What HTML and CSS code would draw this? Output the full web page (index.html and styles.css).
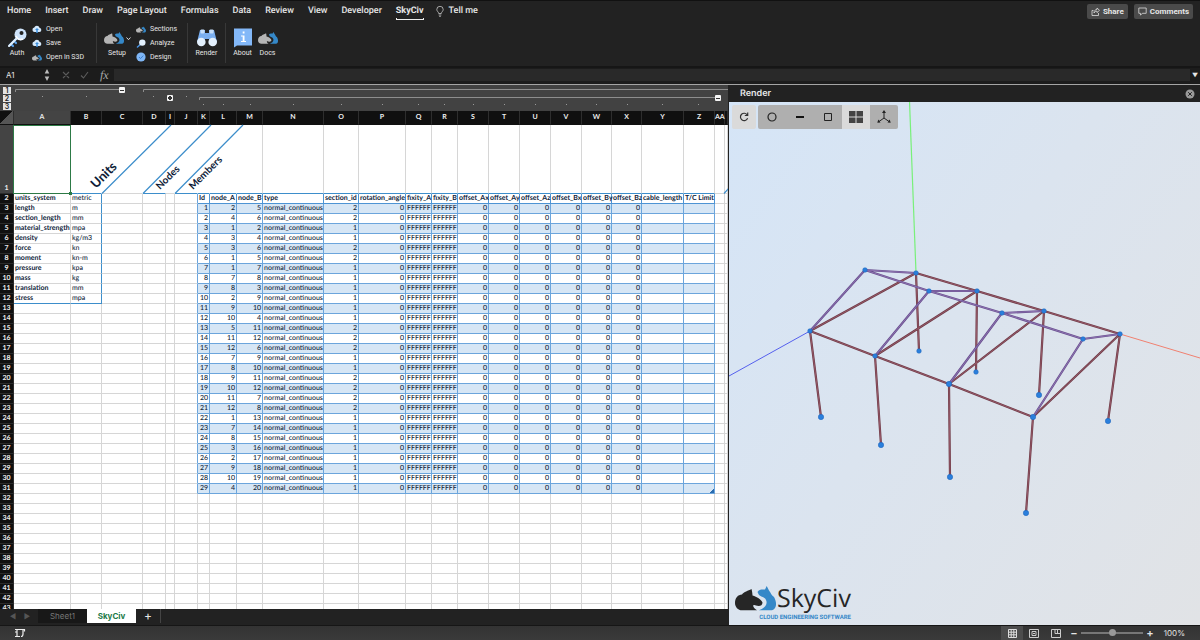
FILE: index.html
```html
<!DOCTYPE html>
<html lang="en">
<head>
<meta charset="utf-8">
<title>SkyCiv workbook</title>
<link rel="stylesheet" href="styles.css">
</head>
<body>
<svg class="defs" aria-hidden="true">
  <symbol id="mark" viewBox="0 0 41 25">
    <path fill="currentColor" d="M0 17C0 12 3 8.500 7 8.500C9 5.500 13 5 16.500 3C17 5 17.500 7.500 17.500 9.500C22 11 26 13 27.500 16.500C27.500 20 24 20.500 21 19.500C20 18.800 18.500 18.800 18 19.500C18.500 22 20 23 22 24.300H7C3 24.300 0 21 0 17Z"/>
    <path fill="#3588c8" d="M22.500 6C24 3 27 3.500 30 3.500L31.700 0L34 4.500C36 7 36 9 39 11C42 16 42 23 37 24.300H24C30 22 33 18 31 14C30 11 26 11 24 9Z"/>
  </symbol>
  <symbol id="cloud" viewBox="0 0 20 16">
    <path fill="#d4e8fb" d="M5 14a4.500 4.500 0 0 1-.5-8.900A5.500 5.500 0 0 1 15 5.500a4.300 4.300 0 0 1 0 8.500z"/>
    <path fill="#3d8edb" d="M10 6l4 4h-2.500v6h-3v-6H6z"/>
  </symbol>
</svg>

<header class="ribbon">
  <nav class="tabs">
    <a href="#home">Home</a><a href="#insert">Insert</a><a href="#draw">Draw</a><a href="#layout">Page Layout</a><a href="#formulas">Formulas</a><a href="#data">Data</a><a href="#review">Review</a><a href="#view">View</a><a href="#developer">Developer</a><a href="#skyciv" class="current">SkyCiv</a>
    <a href="#tell" class="tell"><svg width="8" height="11" viewBox="0 0 8 11" fill="none" stroke="#c8c8c8" stroke-width=".8"><path d="M2.700 7.500C2.700 6 .8 5.400.8 3.500a3.200 3.200 0 0 1 6.400 0C7.200 5.400 5.300 6 5.300 7.500zM2.700 9h2.600M3.200 10.400h1.600"/></svg>Tell me</a>
    <div class="share">
      <button type="button"><svg width="9" height="9" viewBox="0 0 9 9" fill="none" stroke="#ddd" stroke-width=".8"><path d="M2.500 3.500H1v5h6.500V6M3 6c0-2.500 1.500-3.500 3-3.500V1l2.500 2.300L6 5.600V4.200C4.800 4.200 3.800 4.600 3 6z"/></svg>Share</button>
      <button type="button"><svg width="9" height="9" viewBox="0 0 9 9" fill="none" stroke="#ddd" stroke-width=".8"><path d="M.8 1h7.400v5.300H4.300L2.500 8.200V6.300H.8z"/></svg>Comments</button>
    </div>
  </nav>
  <div class="commands">
    <div class="group auth">
      <button type="button" class="big"><svg width="20" height="20" viewBox="0 0 20 20"><path d="M11 9L2.500 17.500M4 16l2 2M7 13l2 2" stroke="#5ba1ea" stroke-width="2.200" stroke-linecap="round"/><path d="M11 9L2 18" stroke="#e3f0fd" stroke-width="2" stroke-linecap="round"/><circle cx="13.500" cy="6.500" r="6" fill="#cfe4fb"/><circle cx="14.500" cy="5" r="2" fill="#222"/><path d="M9 8c1 3 4 4 7 3" stroke="#fff" stroke-width="1.500" fill="none"/></svg>Auth</button>
      <div class="small">
        <button type="button"><svg width="10" height="8"><use href="#cloud"/></svg>Open</button>
        <button type="button"><svg width="10" height="8"><use href="#cloud"/></svg>Save</button>
        <button type="button"><svg class="mark" width="10" height="7"><use href="#mark"/></svg>Open in S3D</button>
      </div>
    </div>
    <div class="group setup">
      <button type="button" class="big drop"><svg class="mark" width="20" height="20"><use href="#mark"/></svg>Setup<svg class="caret" width="5" height="4" viewBox="0 0 5 4"><path d="M.5.500l2 2.200 2-2.200" fill="none" stroke="#ddd"/></svg></button>
      <div class="small">
        <button type="button"><svg class="mark" width="10" height="7"><use href="#mark"/></svg>Sections</button>
        <button type="button"><svg width="10" height="9" viewBox="0 0 10 9"><path d="M5 5L1.500 8" stroke="#4b96e6" stroke-width="1.500" stroke-linecap="round"/><circle cx="6.300" cy="3.600" r="3.200" fill="#e3f0fd"/></svg>Analyze</button>
        <button type="button"><svg width="10" height="10" viewBox="0 0 10 10"><circle cx="5" cy="5" r="4.600" fill="#7fb6f5"/><path d="M3 5l1.500 1.600L7.300 3.600" fill="none" stroke="#3d7fd0"/></svg>Design</button>
      </div>
    </div>
    <div class="group render">
      <button type="button" class="big"><svg width="22" height="20" viewBox="0 0 22 20"><path d="M4 2h5v3h4V2h5l3 12h-8v-3H9v3H1z" fill="#79aef0"/><rect x="4.500" y="1.500" width="4" height="4" rx="1" fill="#c5defa"/><rect x="13.500" y="1.500" width="4" height="4" rx="1" fill="#c5defa"/><circle cx="5.300" cy="14" r="4.300" fill="#e3f0fd"/><circle cx="16.700" cy="14" r="4.300" fill="#e3f0fd"/></svg>Render</button>
    </div>
    <div class="group about">
      <button type="button" class="big"><svg width="20" height="20" viewBox="0 0 20 20"><path d="M1 .5h18v17H4L1 19.500z" fill="#83b8f8"/><path d="M9.700 3.500h1.800v2H9.700zM8 7.500h3.500V13H13v1H8v-1h1.700V8.500H8z" fill="#fff"/></svg>About</button>
      <button type="button" class="big"><svg class="mark" width="20" height="20"><use href="#mark"/></svg>Docs</button>
    </div>
  </div>
</header>

<div class="formula-bar">
  <input class="name-box" aria-label="Name box" value="A1">
  <svg width="6" height="12" viewBox="0 0 6 12" fill="#bbb"><path d="M3 0l2.300 4.500H.7zM3 12L.7 7.500h4.600z"/></svg>
  <svg class="fx-icons" width="52" height="12" viewBox="0 0 52 12" fill="none" stroke="#5b5b5b" stroke-width="1.100"><path d="M6 3l6 6M12 3L6 9M24 6.500L26.500 9 31 3"/></svg>
  <span class="fx">fx</span>
  <input class="formula" aria-label="Formula">
  <span class="expand">▼</span>
</div>

<main class="work">
  <section class="book">
    <div class="outline">
      <svg width="728" height="26" viewBox="0 84 728 26" fill="none" stroke="#8d8d8d"><path d="M15.500 91v-2.500H119M143.500 91v-2.500H728M199.500 99v-2.500H715"/><path stroke="#999" stroke-dasharray="1 43" d="M42 95.500h46"/><path stroke="#999" d="M153 95.500h1M186 95.500h1M203 103.500h1M223 103.500h1M250 103.500h1M293 103.500h1M341 103.500h1M382 103.500h1M418 103.500h1M444 103.500h1M473 103.500h1M504 103.500h1M535 103.500h1M566 103.500h1M596 103.500h1M627 103.500h1M662 103.500h1M698 103.500h1"/></svg>
      <div class="levels"><button type="button">1</button><button type="button">2</button><button type="button">3</button></div>
      <button type="button" class="fold fold-units" aria-label="Collapse"></button>
      <button type="button" class="fold fold-nodes plus" aria-label="Expand"></button>
      <button type="button" class="fold fold-members" aria-label="Collapse"></button>
    </div>
    <div class="grid-view"><table class="grid" id="grid"></table></div>
    <div class="sheet-tabs">
      <button type="button" class="arrow" aria-label="Previous sheet">◀</button>
      <button type="button" class="arrow" aria-label="Next sheet">▶</button>
      <button type="button" class="tab">Sheet1</button>
      <button type="button" class="tab active">SkyCiv</button>
      <button type="button" class="add" aria-label="New sheet">+</button>
    </div>
  </section>

  <aside class="pane">
    <div class="pane-head"><h2>Render</h2><button type="button" aria-label="Close"><svg width="10" height="10" viewBox="0 0 10 10"><circle cx="5" cy="5" r="4.500" fill="#999"/><path d="M3.200 3.200l3.600 3.600M6.800 3.200L3.200 6.800" stroke="#222"/></svg></button></div>
    <div class="scene">
      <svg class="model" id="model" viewBox="729 102 471 523" preserveAspectRatio="xMinYMin slice"></svg>
      <div class="tools">
        <button type="button" class="light reload" aria-label="Reload"><svg width="12" height="12" viewBox="0 0 12 12" fill="none" stroke="#333" stroke-width="1.200"><path d="M9.300 4A3.700 3.700 0 1 0 9.600 7.300M9.700 1.500v3H6.800"/></svg></button>
        <button type="button" class="first" aria-label="Nodes"><svg width="12" height="12" viewBox="0 0 12 12"><circle cx="6" cy="6" r="4" fill="none" stroke="#222" stroke-width="1.200"/></svg></button>
        <button type="button" aria-label="Members"><svg width="12" height="12" viewBox="0 0 12 12"><path d="M2 6h8" stroke="#111" stroke-width="2"/></svg></button>
        <button type="button" aria-label="Plates"><svg width="12" height="12" viewBox="0 0 12 12"><path d="M2.500 2.500h7v7h-7z" fill="none" stroke="#222"/></svg></button>
        <button type="button" class="light" aria-label="Views"><svg width="14" height="12" viewBox="0 0 14 12"><path d="M0 0h6.500v5.500H0zM7.500 0H14v5.500H7.500zM0 6.500h6.500V12H0zM7.500 6.500H14V12H7.500z" fill="#444"/></svg></button>
        <button type="button" class="last" aria-label="Axes"><svg width="14" height="14" viewBox="0 0 14 14" fill="none" stroke="#222"><path d="M7 2v6M7 8L2 11.500M7 8l5 3.500"/><path stroke="none" fill="#222" d="M7 0l2 3H5zM.3 12.800l1-3.300 2.200 3zM13.700 12.800l-1-3.300-2.200 3z"/></svg></button>
      </div>
      <div class="brand">
        <svg width="41" height="25"><use href="#mark"/></svg>
        <span class="brand-name">SkyCiv</span>
        <span class="brand-line">CLOUD ENGINEERING SOFTWARE</span>
      </div>
    </div>
  </aside>
</main>

<footer class="status">
  <svg class="mode" width="12" height="10" viewBox="0 0 12 10" fill="none" stroke="#eee" stroke-width="1.200"><path d="M1 1.500h10M3 1.500v7M1 8.500h5M9 1.500v4.500q0 2.500-2 2.500M1 4h2M10.500 1v2.500"/></svg>
  <button type="button" class="view on" aria-label="Normal view"><svg width="9" height="9" viewBox="0 0 9 9" fill="none" stroke="#ddd"><path d="M.5.500h8v8h-8zM3.200 0v9M5.800 0v9M0 3.200h9M0 5.800h9"/></svg></button>
  <button type="button" class="view" aria-label="Page layout"><svg width="10" height="9" viewBox="0 0 10 9" fill="none" stroke="#ccc"><path d="M.5.500h9v8h-9zM3 2.500h4v4H3zM4 4.500h2"/></svg></button>
  <button type="button" class="view" aria-label="Page breaks"><svg width="10" height="9" viewBox="0 0 10 9" fill="none" stroke="#ccc"><path d="M.5.500h9v8h-9zM4 .5v4M6.500.500v4M4 4.500h5.500"/></svg></button>
  <button type="button" class="step" aria-label="Zoom out">−</button>
  <input class="zoom" type="range" min="0" max="100" value="50" aria-label="Zoom">
  <button type="button" class="step" aria-label="Zoom in">+</button>
  <span class="percent">100%</span>
</footer>
<script src="app.js"></script>
</body>
</html>
```
FILE: styles.css
```css
* { box-sizing: border-box; }
body {
  margin: 0;
  height: 100vh;
  display: flex;
  flex-direction: column;
  overflow: hidden;
  background: #222;
  color: #e6e6e6;
  font-family: Inter, "Liberation Sans", sans-serif;
  font-size: 8px;
  text-rendering: geometricPrecision;
}
button, input {
  font: inherit;
  color: inherit;
  background: none;
  border: 0;
  padding: 0;
  margin: 0;
}
svg { display: block; flex: none; }
.defs { position: absolute; width: 0; height: 0; }
.mark { color: #b5b5b5; }

/* ribbon */
.ribbon { flex: none; border-top: 1px solid #111; font-family: Roboto, "Liberation Sans", sans-serif; }
.tabs {
  display: flex;
  align-items: center;
  gap: 14px;
  height: 20px;
  padding: 0 7px;
  font-size: 9px;
  font-weight: 500;
}
.tabs a { color: inherit; text-decoration: none; line-height: 14px; white-space: nowrap; }
.tabs .current { font-weight: 700; box-shadow: 0 2px 0 -1px #222, 0 2px 0 #eee; }
.tabs .tell { display: flex; align-items: center; gap: 5px; margin-left: -2px; }
.share { margin-left: auto; display: flex; gap: 6px; font-weight: 700; font-size: 8px; }
.share button {
  display: flex;
  align-items: center;
  gap: 3px;
  height: 15px;
  padding: 0 4px;
  border-radius: 2px;
  background: #4a4a4a;
}
.commands { display: flex; height: 45px; padding: 2px 0 3px; font-size: 7px; font-weight: 400; }
.group { display: flex; align-items: center; border-right: 1px solid #383838; }
.group:last-child { border: 0; }
.auth { width: 97px; padding-left: 3px; }
.setup { width: 91px; padding-left: 5px; }
.render { width: 38px; justify-content: center; }
.about { padding-left: 4px; }
.big {
  position: relative;
  width: 28px;
  display: flex;
  flex-direction: column;
  align-items: center;
  line-height: 11px;
}
.about .big { width: 25px; }
.setup .big { width: 30px; }
.setup .big .mark { margin-right: 6px; }
.caret { position: absolute; right: 1px; top: 9px; }
.small { display: flex; flex-direction: column; gap: 3px; padding-left: 1px; }
.setup .small { padding-left: 4px; }
.small button { display: flex; align-items: center; gap: 4px; height: 11px; white-space: nowrap; }

/* formula bar */
.formula-bar {
  flex: none;
  display: flex;
  align-items: center;
  height: 19px;
  background: #1c1c1c;
  border-top: 2px solid #161616;
  border-bottom: 1px solid #a5a5a5;
  padding-bottom: 2px;
}
.name-box { width: 44px; padding-left: 6px; }
.fx-icons { margin-left: 7px; }
.fx {
  margin-left: -9px;
  width: 20px;
  font: italic 12px "Liberation Serif", serif;
  color: #aaa;
}
.formula { flex: 1; height: 12px; background: #292929; margin-left: -6px; }
.expand { width: 10px; text-align: center; font-size: 6px; }

/* workbook */
.work { flex: 1; display: flex; min-height: 0; }
.book {
  flex: 728;
  min-width: 0;
  display: flex;
  flex-direction: column;
  background: #fff;
}
.outline { position: relative; flex: none; height: 26px; overflow: hidden; background: #424242; }
.outline > svg { position: absolute; left: 0; top: 0; }
.levels { display: flex; flex-direction: column; gap: 1px; padding: 2px 0 0 3px; }
.levels button {
  width: 8px;
  height: 7px;
  line-height: 7px;
  font-size: 7px;
  font-weight: 600;
  background: #e4e4e4;
  color: #222;
}
.fold {
  position: absolute;
  width: 6px;
  height: 6px;
  border-radius: 1px;
  background: linear-gradient(#333, #333) center / 4px 1px no-repeat #f4f4f4;
}
.fold.plus {
  background: linear-gradient(#333, #333) center / 4px 2px no-repeat, linear-gradient(#333, #333) center / 2px 4px no-repeat #f4f4f4;
}
.fold-units { left: 119px; top: 2px; }
.fold-nodes { left: 167px; top: 10px; }
.fold-members { left: 715px; top: 10px; }

.grid-view { flex: 1; min-height: 0; overflow: hidden; }
.grid {
  width: 100%;
  table-layout: fixed;
  border-collapse: separate;
  border-spacing: 0;
  font-family: Lato, "Liberation Sans", sans-serif;
  font-size: 7px;
  line-height: 9px;
  color: #0c1a36;
}
.grid th, .grid td {
  height: 10px;
  padding: 0 1px;
  border: solid #d6d6d6;
  border-width: 0 1px 1px 0;
  white-space: nowrap;
  overflow: hidden;
  text-align: left;
}
.grid td { font-weight: 500; }
.grid thead th {
  height: 14px;
  padding: 0;
  background: #101010;
  border-color: #2e2e2e;
  border-bottom-color: #101010;
  color: #eee;
  text-align: center;
  overflow: visible;
}
.grid tbody th { background: #101010; border-color: #2b2b2b; color: #eee; text-align: center; padding: 0; }
.grid thead th.sel, .grid tbody th.sel { background: #444; }
.grid thead .corner { background: linear-gradient(135deg, #101010 50%, #555 50%); }
.grid .r1 td { height: 69px; border-right-color: transparent; overflow: visible; }
.grid .r1 th { vertical-align: bottom; }
.grid .r1 .edge { border-right-color: #d6d6d6; }
.grid .r1 .line { border-bottom-color: #3d8ecb; }
.grid .a1 { position: relative; }
.cursor { position: absolute; inset: 0 -1px -1px -1px; border: 1px solid #2d7a46; }
.cursor::after { content: ""; position: absolute; right: -2px; bottom: -2px; width: 3px; height: 3px; background: #2d7a46; }
.banner { position: absolute; left: 0; top: 0; overflow: visible; font-weight: 700; }
.grid .key { font-weight: 700; }
.grid .val { border-right-color: #3d8ecb; }
.grid .under { border-bottom-color: #3d8ecb; }
.grid .before { border-right-color: #6ba5dc; }
.grid .head { font-weight: 700; border-color: #4d94d4; padding: 0 0 0 1px; overflow: visible; }
.grid .cell { border-color: #6ba5dc; }
.grid .num { text-align: right; }
.grid .band { background: #d6e6f5; }
.grid .end { background-image: linear-gradient(135deg, transparent 50%, #2a6cb0 50%); background-size: 4px 4px; background-position: right bottom; background-repeat: no-repeat; }

.sheet-tabs { flex: none; display: flex; align-items: flex-start; height: 16px; background: #222; padding-left: 6px; }
.sheet-tabs button { height: 14px; }
.arrow { width: 14px; color: #555; font-size: 7px; }
.tab { width: 49px; background: #181818; color: #777; }
.arrow + .tab { margin-left: 4px; }
.tab.active { background: #fff; color: #217a48; font-weight: 700; }
.add { width: 25px; font-size: 12px; line-height: 14px; border-right: 1px solid #444; }

/* render pane */
.pane { flex: 471; min-width: 0; display: flex; flex-direction: column; border-left: 1px solid #222; }
.pane-head {
  flex: none;
  display: flex;
  align-items: center;
  justify-content: space-between;
  height: 17px;
  padding: 0 5px 0 11px;
}
.pane-head h2 { margin: 0; font-size: 9px; font-weight: 600; }
.scene {
  position: relative;
  flex: 1;
  min-height: 0;
  background: linear-gradient(125deg, #d5e5f7 0%, #dbe4ef 45%, #e1e3e6 100%);
}
.model { position: absolute; left: 0; top: 0; width: 100%; height: 100%; }
.tools { position: absolute; left: 3px; top: 3px; display: flex; }
.tools button {
  width: 28px;
  height: 24px;
  background: #afafaf;
  display: flex;
  align-items: center;
  justify-content: center;
}
.tools .light { background: #dadada; }
.tools .reload { width: 24px; margin-right: 2px; border-radius: 2px; }
.tools .first { border-radius: 2px 0 0 2px; }
.tools .last { border-radius: 0 2px 2px 0; }
.brand {
  position: absolute;
  left: 6px;
  bottom: 3px;
  display: grid;
  grid-template-columns: auto auto;
  column-gap: 1px;
  align-items: center;
  color: #262626;
  font-family: "Open Sans", "Noto Sans", sans-serif;
}
.brand-name { font-size: 25px; line-height: 32px; }
.brand-line {
  grid-column: 1 / 3;
  justify-self: end;
  font-family: Roboto, "Open Sans", sans-serif;
  font-size: 6px;
  line-height: 8px;
  font-weight: 700;
  color: #3588c8;
}

/* status bar */
.status {
  flex: none;
  display: flex;
  align-items: center;
  height: 15px;
  padding-right: 15px;
  background: linear-gradient(#333, #3a3a3a);
  border-top: 1px solid #161616;
}
.mode { margin: 0 auto 0 14px; }
.view { width: 22px; height: 14px; display: flex; align-items: center; justify-content: center; }
.view.on { background: #4c4c4c; }
.step { width: 14px; font-size: 11px; line-height: 12px; font-weight: 600; }
.zoom { -webkit-appearance: none; appearance: none; width: 62px; height: 10px; }
.zoom::-webkit-slider-runnable-track { height: 2px; background: #777; }
.zoom::-webkit-slider-thumb {
  -webkit-appearance: none;
  width: 7px;
  height: 7px;
  margin-top: -3px;
  border-radius: 50%;
  background: #999;
}
.percent { width: 28px; text-align: right; }
```
FILE: app.js
```js
const columns = [
  ["A", 57], ["B", 31], ["C", 41], ["D", 23], ["I", 9], ["J", 23], ["K", 12],
  ["L", 27], ["M", 26], ["N", 61], ["O", 35], ["P", 47], ["Q", 26], ["R", 26],
  ["S", 31], ["T", 31], ["U", 31], ["V", 31], ["W", 30], ["X", 30], ["Y", 42],
  ["Z", 31], ["AA", 10], ["", 0]
];
const units = [
  ["units_system", "metric"], ["length", "m"], ["section_length", "mm"],
  ["material_strength", "mpa"], ["density", "kg/m3"], ["force", "kn"],
  ["moment", "kn-m"], ["pressure", "kpa"], ["mass", "kg"],
  ["translation", "mm"], ["stress", "mpa"]
];
const fields = ["Id", "node_A", "node_B", "type", "section_id", "rotation_angle",
  "fixity_A", "fixity_B", "offset_Ax", "offset_Ay", "offset_Az", "offset_Bx",
  "offset_By", "offset_Bz", "cable_length", "T/C Limit"];
// node A, node B, section
const members = [
  [2, 5, 2], [4, 6, 2], [1, 2, 1], [3, 4, 1], [3, 6, 2], [1, 5, 2], [1, 7, 1],
  [7, 8, 1], [8, 3, 1], [2, 9, 1], [9, 10, 1], [10, 4, 1], [5, 11, 2],
  [11, 12, 2], [12, 6, 2], [7, 9, 1], [8, 10, 1], [9, 11, 2], [10, 12, 2],
  [11, 7, 2], [12, 8, 2], [1, 13, 1], [7, 14, 1], [8, 15, 1], [3, 16, 1],
  [2, 17, 1], [9, 18, 1], [10, 19, 1], [4, 20, 1]
];
const FIRST = 6;
const LAST = 21;

const banner = `<span class="cursor"></span><svg class="banner" width="230" height="69" viewBox="14 124 230 69">
<path d="M102 192.500L171 124M143 192.500L211 124M175 192.500L243 124M724 192.500L729 187" fill="none" stroke="#3d8ecb" stroke-width="1.200"/>
<g fill="#0c1a36"><text transform="translate(96 188) rotate(-45)" font-size="13">Units</text>
<text transform="translate(160 189) rotate(-45)" font-size="10">Nodes</text>
<text transform="translate(193 189) rotate(-45)" font-size="10">Members</text></g></svg>`;

let html = '<colgroup><col style="width:14px">';
for (const [, w] of columns) html += w ? `<col style="width:${w}px">` : "<col>";
html += '</colgroup><thead><tr><th class="corner"></th>';
columns.forEach(([name], i) => { html += `<th${i === 0 ? ' class="sel"' : ""}>${name}</th>`; });
html += "</tr></thead><tbody>";

html += '<tr class="r1"><th class="sel">1</th>';
columns.forEach((c, i) => {
  const cls = [];
  if (i === 0) cls.push("a1");
  if (i >= 8) cls.push("edge");
  if (i === 1 || i === 3 || (i >= 5 && i <= LAST)) cls.push("line");
  html += `<td class="${cls.join(" ")}">${i === 0 ? banner : ""}</td>`;
});
html += "</tr>";

for (let r = 2; r <= 43; r++) {
  html += `<tr><th>${r}</th>`;
  const m = members[r - 3];
  const values = m && [r - 2, m[0], m[1], "normal_continuous", m[2], 0, "FFFFFF", "FFFFFF", 0, 0, 0, 0, 0, 0, "", ""];
  columns.forEach((c, i) => {
    const cls = [];
    let text = "";
    if (i < 2 && units[r - 2]) {
      text = units[r - 2][i];
      cls.push(i ? "val" : "key");
      if (r === 12) cls.push("under");
    } else if (i === FIRST - 1 && r <= 31) {
      cls.push("before");
    } else if (i >= FIRST && i <= LAST) {
      if (r === 2) {
        text = fields[i - FIRST];
        cls.push("head");
      } else if (values) {
        text = values[i - FIRST];
        cls.push("cell");
        if (typeof text === "number") cls.push("num");
        if (r % 2) cls.push("band");
        if (r === 31 && i === LAST) cls.push("end");
      }
    }
    html += `<td class="${cls.join(" ")}">${text}</td>`;
  });
  html += "</tr>";
}
document.getElementById("grid").innerHTML = html + "</tbody>";

// projected node positions of the frame
const nodes = {
  1: [810, 331], 2: [916, 273], 3: [1033, 417], 4: [1120, 334], 5: [865, 270],
  6: [1083, 339], 7: [875, 356], 8: [949, 384], 9: [977, 291], 10: [1044, 311],
  11: [929, 291], 12: [1002, 313], 13: [821, 417], 14: [881, 445],
  15: [950, 477], 16: [1026, 513], 17: [919, 351], 18: [976, 372],
  19: [1039, 395], 20: [1108, 421]
};
const path = (section) => members.filter((m) => m[2] === section)
  .map(([a, b]) => `M${nodes[a]}L${nodes[b]}`).join("");
const dots = Object.values(nodes)
  .map(([x, y]) => `<circle cx="${x}" cy="${y}" r="${y > 380 ? 2.700 : 2.300}" fill="#2a7fdc" stroke="#1d63b8" stroke-width=".5"/>`).join("");
document.getElementById("model").innerHTML = `
<path d="M909.500 101L916 273" stroke="#79f07a" stroke-width="1.200"/>
<path d="M729 376L810 331" stroke="#5560ee"/>
<path d="M1120 334L1200 358" stroke="#f08070"/>
<g fill="none"><path d="${path(1)}" stroke="#6d3a46" stroke-width="2.200"/>
<path d="${path(1)}" stroke="#a06070" stroke-width=".8"/>
<path d="${path(2)}" stroke="#684d8e" stroke-width="2.200"/>
<path d="${path(2)}" stroke="#967cb8" stroke-width=".8"/></g>${dots}`;
```
